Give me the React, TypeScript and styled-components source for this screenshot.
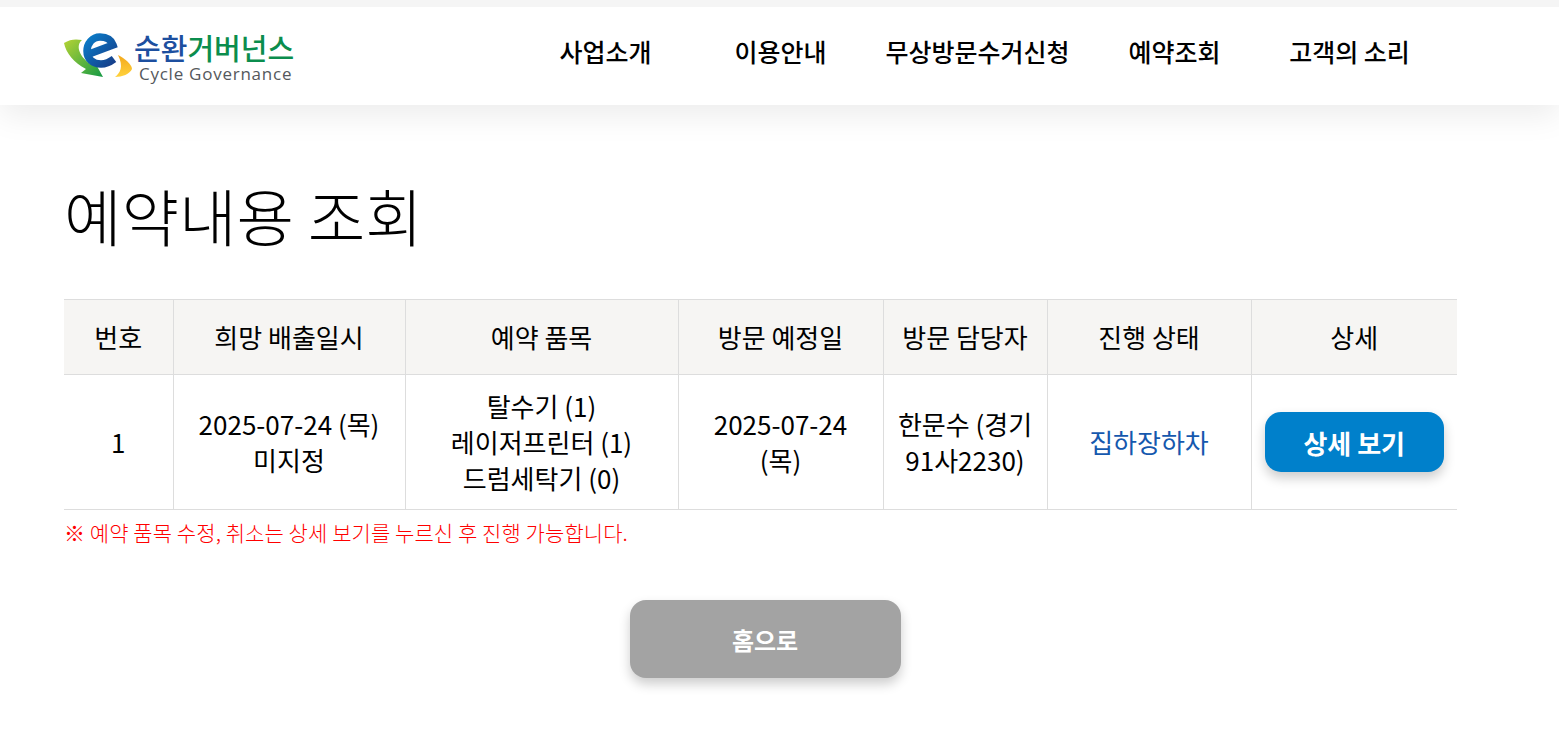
import { createGlobalStyle } from "styled-components";
import styled from "styled-components";

const KR = `"Noto Sans CJK KR", "Noto Sans", sans-serif`;

const GlobalStyle = createGlobalStyle`
  html, body {
    margin: 0;
    background: #fff;
    color: #000;
    font-family: ${KR};
  }
`;

const Page = styled.div`
  width: 1559px;
  height: 748px;
  overflow: hidden;
  background: #fff;
  border-top: 7px solid #f5f5f5;
  box-sizing: border-box;
`;

const Header = styled.header`
  display: flex;
  align-items: center;
  height: 98px;
  padding: 0 122px 0 64px;
  background: #fff;
  box-shadow: 0 10px 30px rgba(0, 0, 0, 0.08);
`;

const Logo = styled.a`
  display: flex;
  align-items: center;
  width: 232px;
  height: 58px;
`;

const LogoText = styled.div`
  display: flex;
  flex-direction: column;
  padding-top: 4px;
  white-space: nowrap;
`;

const LogoTitle = styled.div`
  font-size: 29px;
  line-height: 32px;
  font-weight: 500;
  color: #1d4f9f;

  span {
    color: #0b8d4d;
  }
`;

const LogoSub = styled.div`
  margin-left: 5px;
  font-family: "Open Sans", sans-serif;
  font-size: 17px;
  line-height: 22px;
  letter-spacing: 0.75px;
  color: #55585c;
`;

const Nav = styled.nav`
  display: flex;
  margin-left: auto;
`;

const NavItem = styled.a<{ $width: number }>`
  width: ${(p) => p.$width}px;
  text-align: center;
  font-size: 25px;
  font-weight: 500;
  white-space: nowrap;
  color: #000;
  transform: translateY(-5px);
`;

const Main = styled.main`
  padding: 0 102px 0 64px;
`;

const Title = styled.h1`
  margin: 0;
  padding-top: 68px;
  height: 126px;
  font-size: 62.5px;
  line-height: 84px;
  font-weight: 300;
`;

const Table = styled.table`
  width: 1393px;
  border-collapse: collapse;
  table-layout: fixed;
  font-size: 26px;
  line-height: 36px;
  text-align: center;
  border-top: 1px solid #ddd;
  border-bottom: 1px solid #ddd;
`;

const Th = styled.th<{ $width: number }>`
  box-sizing: border-box;
  width: ${(p) => p.$width}px;
  height: 75px;
  padding: 0;
  font-weight: 400;
  background: #f6f5f3;
  border-bottom: 1px solid #ddd;
  border-left: 1px solid #ddd;

  &:first-child {
    border-left: 0;
  }
`;

const Td = styled.td<{ $accent?: boolean }>`
  height: 134px;
  padding: 0 13px;
  border-left: 1px solid #ddd;
  color: ${(p) => (p.$accent ? "#1558ae" : "#000")};

  &:first-child {
    border-left: 0;
  }
`;

const DetailButton = styled.button`
  display: block;
  width: 179px;
  height: 60px;
  margin: 0 auto;
  border: 0;
  border-radius: 16px;
  background: #0080cb;
  color: #fff;
  font-family: inherit;
  font-size: 26px;
  font-weight: 700;
  box-shadow: 0 6px 12px rgba(0, 0, 0, 0.2);
`;

const Note = styled.p`
  margin: 8px 0 0;
  font-size: 21px;
  line-height: 29px;
  font-weight: 300;
  letter-spacing: 0.08px;
  white-space: nowrap;
  color: #f00;
`;

const Actions = styled.div`
  display: flex;
  justify-content: center;
  width: 1402px;
  margin-top: 53px;
`;

const HomeButton = styled.button`
  width: 271px;
  height: 78px;
  border: 0;
  border-radius: 16px;
  background: #a3a3a3;
  color: #fff;
  font-family: inherit;
  font-size: 24px;
  font-weight: 700;
  box-shadow: 0 6px 12px rgba(0, 0, 0, 0.2);
`;

const columns = [
  { label: "번호", width: 109 },
  { label: "희망 배출일시", width: 232 },
  { label: "예약 품목", width: 273 },
  { label: "방문 예정일", width: 205 },
  { label: "방문 담당자", width: 164 },
  { label: "진행 상태", width: 204 },
  { label: "상세", width: 206 },
];

const navItems = [
  { label: "사업소개", width: 175 },
  { label: "이용안내", width: 175 },
  { label: "무상방문수거신청", width: 219 },
  { label: "예약조회", width: 175 },
  { label: "고객의 소리", width: 175 },
];

function LogoMark() {
  return (
    <svg width="70" height="50" viewBox="0 0 70 50" style={{ flex: "none" }}>
      <defs>
        <linearGradient id="arrow" x1="0" y1="0" x2="1" y2="1">
          <stop offset="0" stopColor="#b5d334" />
          <stop offset="1" stopColor="#159a45" />
        </linearGradient>
        <linearGradient id="sun" x1="0" y1="0" x2="0" y2="1">
          <stop offset="0" stopColor="#f3a81c" />
          <stop offset="1" stopColor="#ffd23c" />
        </linearGradient>
        <linearGradient id="egg" x1="0" y1="0" x2="1" y2="1">
          <stop offset="0" stopColor="#0a7cc8" />
          <stop offset="1" stopColor="#173f8a" />
        </linearGradient>
      </defs>
      <path
        d="M0 12C6 8 12 8 18 9C12 14 14 24 26 33L29 28L39 46L17 42L22 38C10 32 2 22 0 12Z"
        fill="url(#arrow)"
      />
      <path d="M54 24C60 27 68 33 68 38C66 43 58 46 51 46C56 42 60 36 54 24Z" fill="url(#sun)" />
      <path
        d="M25 23L49 14C47 8 42 6 36 6C28 6 23 13 23 20C23 28 29 33 37 33C42 33 46 31 50 28"
        fill="none"
        stroke="url(#egg)"
        strokeWidth="7.5"
      />
    </svg>
  );
}

export default function App() {
  return (
    <Page>
      <GlobalStyle />
      <Header>
        <Logo>
          <LogoMark />
          <LogoText>
            <LogoTitle>
              순환<span>거버넌스</span>
            </LogoTitle>
            <LogoSub>Cycle Governance</LogoSub>
          </LogoText>
        </Logo>
        <Nav>
          {navItems.map((item) => (
            <NavItem key={item.label} $width={item.width}>
              {item.label}
            </NavItem>
          ))}
        </Nav>
      </Header>
      <Main>
        <Title>예약내용 조회</Title>
        <Table>
          <thead>
            <tr>
              {columns.map((col) => (
                <Th key={col.label} $width={col.width}>
                  {col.label}
                </Th>
              ))}
            </tr>
          </thead>
          <tbody>
            <tr>
              <Td>1</Td>
              <Td>
                2025-07-24 (목)
                <br />
                미지정
              </Td>
              <Td>
                탈수기 (1)
                <br />
                레이저프린터 (1)
                <br />
                드럼세탁기 (0)
              </Td>
              <Td>2025-07-24 (목)</Td>
              <Td>한문수 (경기 91사2230)</Td>
              <Td $accent>집하장하차</Td>
              <Td>
                <DetailButton>상세 보기</DetailButton>
              </Td>
            </tr>
          </tbody>
        </Table>
        <Note>※ 예약 품목 수정, 취소는 상세 보기를 누르신 후 진행 가능합니다.</Note>
        <Actions>
          <HomeButton>홈으로</HomeButton>
        </Actions>
      </Main>
    </Page>
  );
}
